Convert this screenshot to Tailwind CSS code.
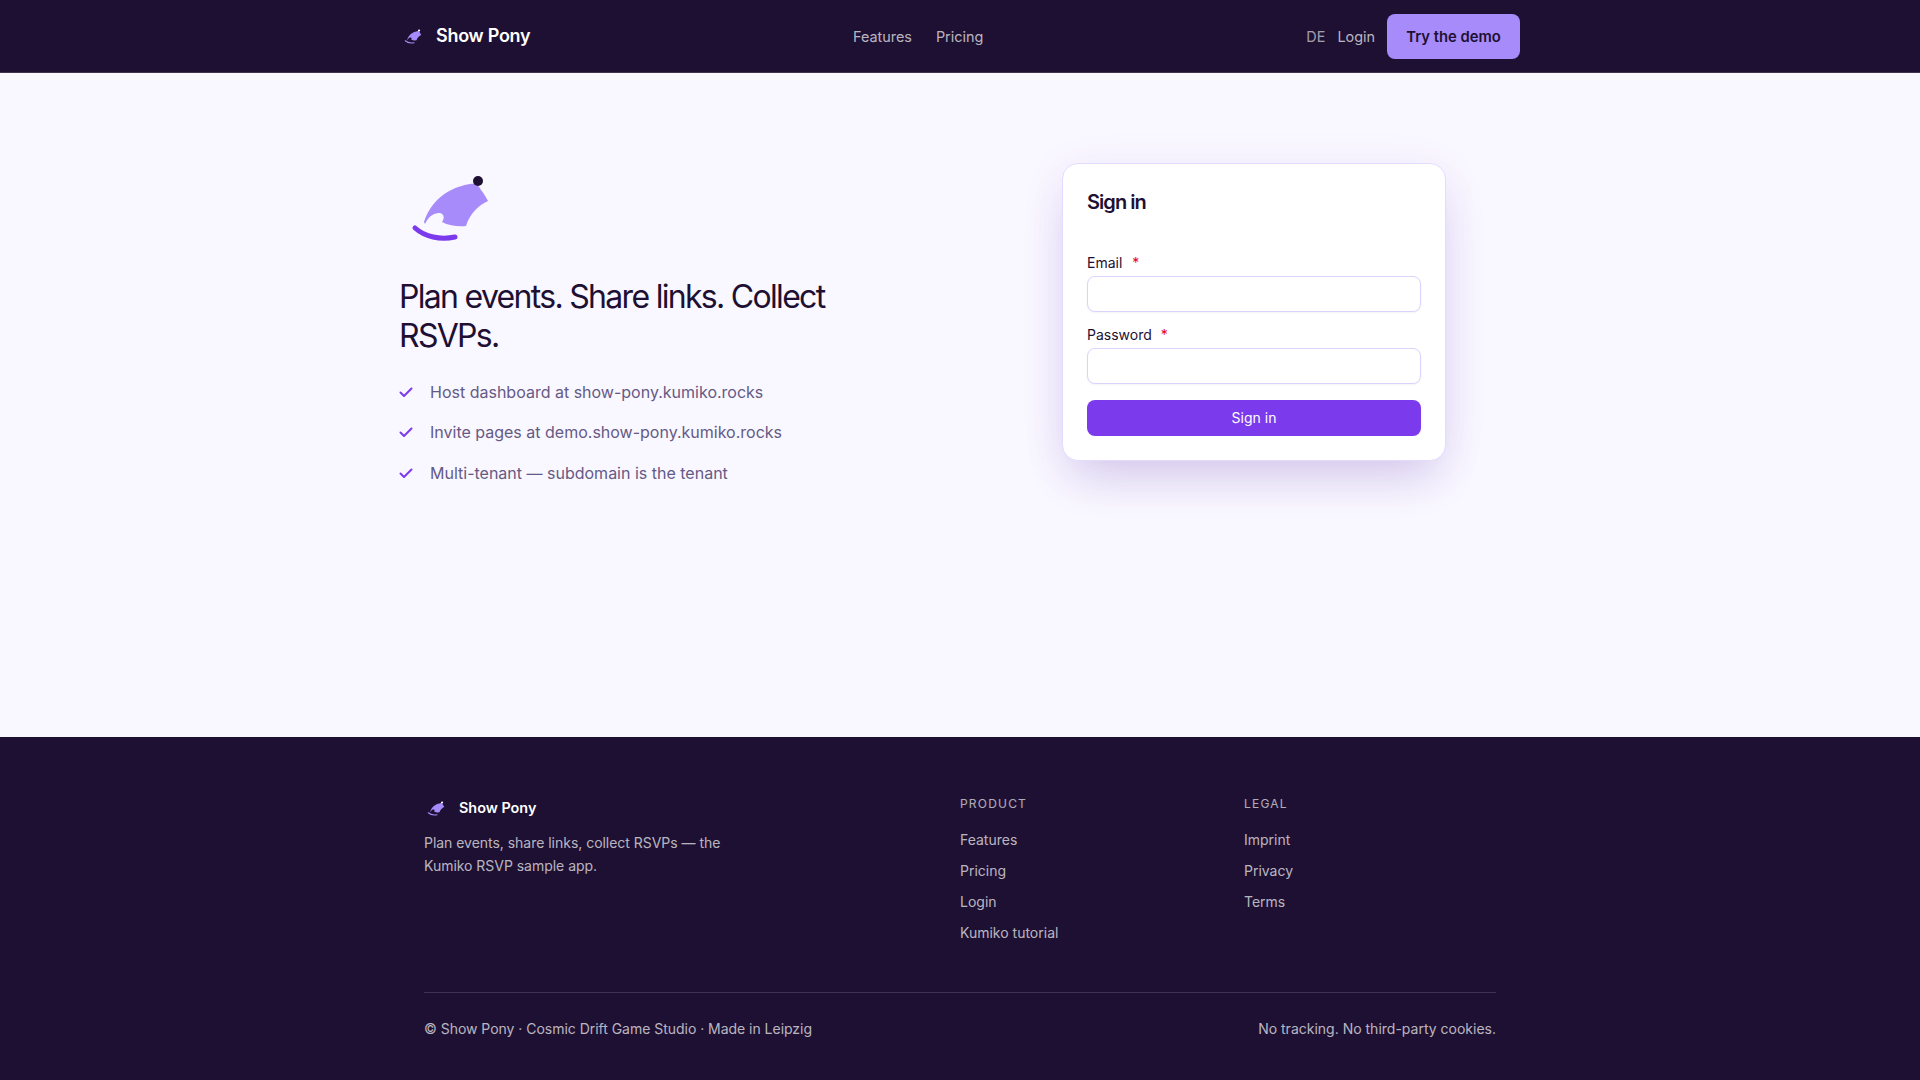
<!DOCTYPE html>
<html lang="en">
<head>
    <meta charset="UTF-8">
    <title>Show Pony - Sign in</title>
    <script src="https://cdn.jsdelivr.net/npm/@tailwindcss/browser@4"></script>
</head>
<body class="bg-[#f9f7ff] font-['Inter',sans-serif] text-[#1e1033] h-[1080px] flex flex-col overflow-hidden antialiased">

    <!-- Header -->
    <header class="bg-[#1e1033] border-b border-white/15 h-[73px] shrink-0">
        <div class="w-[1120px] mx-auto h-[72px] flex items-center">
            <a href="#" class="w-[400px] flex items-center gap-3 text-white text-lg font-semibold tracking-[-0.015em]">
                <span class="w-6 flex justify-center pt-[3px]">
                    <svg width="21" height="21" viewBox="0 0 96 96"><path d="M24 57C29 42 41 24 70 19C76 18 79 21 81 25C84 29 86 32 88 36C79 40 70 48 66 61C60 62 49 61 42 57C45 53 44 49 40 48C35 48 29 50 25 59Z" fill="#a78bfa"/><path d="M15 63C25 72 40 75 55 72" fill="none" stroke="#a78bfa" stroke-width="5" stroke-linecap="round"/><circle cx="78" cy="16" r="5" fill="#fff"/></svg>
                </span>
                Show Pony
            </a>
            <nav class="flex-1 flex gap-6 text-[14.4px] text-white/70 pl-[53px] pt-[1px]">
                <a href="#">Features</a>
                <a href="#">Pricing</a>
            </nav>
            <div class="flex items-center gap-3 text-[14.4px] text-white/70">
                <a href="#" class="text-white/60 pt-[1px]">DE</a>
                <a href="#" class="pt-[1px]">Login</a>
                <a href="#" class="bg-[#a78bfa] text-[#1e1033] text-[14.8px] font-semibold rounded-lg h-[45px] w-[133px] flex items-center justify-center pt-[2px]">Try the demo</a>
            </div>
        </div>
    </header>

    <!-- Main Content -->
    <main class="flex-1 w-[1120px] mx-auto pt-[90px] pr-[74px] flex justify-between items-start">
        <div class="w-[480px]">
            <svg class="mt-[2px]" width="96" height="96" viewBox="0 0 96 96"><path d="M24 57C29 42 41 24 70 19C76 18 79 21 81 25C84 29 86 32 88 36C79 40 70 48 66 61C60 62 49 61 42 57C45 53 44 49 40 48C35 48 29 50 25 59Z" fill="#a78bfa"/><path d="M15 63C25 72 40 75 55 72" fill="none" stroke="#7c3aed" stroke-width="5" stroke-linecap="round"/><circle cx="78" cy="16" r="5" fill="#1e1033"/></svg>
            <h1 class="mt-[16px] -ml-px text-[32px] leading-[39px] font-normal tracking-[-0.053em]">Plan events. Share links. Collect RSVPs.</h1>
            <ul class="mt-[16.7px] flex flex-col text-[#655a85] text-base">
                <li class="h-[40.5px] flex items-center gap-[17px]">
                    <svg class="w-[14px] h-[14px] -ml-px" viewBox="0 0 14 14" fill="none" stroke="#7c3aed" stroke-width="2" stroke-linecap="round" stroke-linejoin="round"><path d="M1.5 7.5L5 11L12.5 3.5"/></svg>
                    Host dashboard at show-pony.kumiko.rocks
                </li>
                <li class="h-[40.5px] flex items-center gap-[17px]">
                    <svg class="w-[14px] h-[14px] -ml-px" viewBox="0 0 14 14" fill="none" stroke="#7c3aed" stroke-width="2" stroke-linecap="round" stroke-linejoin="round"><path d="M1.5 7.5L5 11L12.5 3.5"/></svg>
                    Invite pages at demo.show-pony.kumiko.rocks
                </li>
                <li class="h-[40.5px] flex items-center gap-[17px]">
                    <svg class="w-[14px] h-[14px] -ml-px" viewBox="0 0 14 14" fill="none" stroke="#7c3aed" stroke-width="2" stroke-linecap="round" stroke-linejoin="round"><path d="M1.5 7.5L5 11L12.5 3.5"/></svg>
                    Multi-tenant — subdomain is the tenant
                </li>
            </ul>
        </div>

        <!-- Sign in card -->
        <form class="w-[384px] h-[298px] bg-white border border-[#e4dcff] rounded-2xl px-6 pt-6 shadow-[0_24px_48px_-12px_rgba(76,29,149,0.2),0_8px_48px_rgba(124,58,237,0.07)]">
            <h2 class="text-xl font-semibold tracking-[-0.047em] leading-7">Sign in</h2>
            <label class="block mt-[32px] h-[28px] text-sm font-normal leading-[29px]">Email <span class="text-red-600 ml-1.5">*</span></label>
            <input class="block w-full h-9 border border-[#dcd2ff] rounded-lg bg-white shadow-xs" type="email">
            <label class="block mt-[8px] h-[28px] text-sm font-normal leading-[29px]">Password <span class="text-red-600 ml-[5px]">*</span></label>
            <input class="block w-full h-9 border border-[#dcd2ff] rounded-lg bg-white shadow-xs" type="password">
            <button type="button" class="block w-full h-9 mt-4 bg-[#7c3aed] text-white text-sm font-normal rounded-lg">Sign in</button>
        </form>
    </main>

    <!-- Footer -->
    <footer class="bg-[#1e1033] h-[343px] shrink-0">
        <div class="w-[1072px] mx-auto pt-[59px]">
            <div class="grid grid-cols-[2fr_1fr_1fr] gap-8 h-[196px]">
                <div>
                    <div class="flex items-center gap-[13px] text-white font-semibold text-[14.4px] mt-[2px] h-5">
                        <span class="w-[22px] flex justify-center pt-[2px]">
                            <svg width="21" height="21" viewBox="0 0 96 96"><path d="M24 57C29 42 41 24 70 19C76 18 79 21 81 25C84 29 86 32 88 36C79 40 70 48 66 61C60 62 49 61 42 57C45 53 44 49 40 48C35 48 29 50 25 59Z" fill="#a78bfa"/><path d="M15 63C25 72 40 75 55 72" fill="none" stroke="#a78bfa" stroke-width="5" stroke-linecap="round"/><circle cx="78" cy="16" r="5" fill="#fff"/></svg>
                        </span>
                        Show Pony
                    </div>
                    <p class="mt-[13px] w-[320px] text-sm leading-[23px] text-white/70 tracking-[-0.002em]">Plan events, share links, collect RSVPs — the Kumiko RSVP sample app.</p>
                </div>
                <div>
                    <h3 class="text-xs font-normal uppercase tracking-[0.1em] text-white/65">Product</h3>
                    <ul class="mt-[12px] flex flex-col text-sm text-white/70">
                        <li class="h-[31px] flex items-center">Features</li>
                        <li class="h-[31px] flex items-center">Pricing</li>
                        <li class="h-[31px] flex items-center">Login</li>
                        <li class="h-[31px] flex items-center">Kumiko tutorial</li>
                    </ul>
                </div>
                <div>
                    <h3 class="text-xs font-normal uppercase tracking-[0.1em] text-white/65">Legal</h3>
                    <ul class="mt-[12px] flex flex-col text-sm text-white/70">
                        <li class="h-[31px] flex items-center">Imprint</li>
                        <li class="h-[31px] flex items-center">Privacy</li>
                        <li class="h-[31px] flex items-center">Terms</li>
                    </ul>
                </div>
            </div>
            <div class="border-t border-white/15 pt-[26px] flex justify-between text-sm text-white/70">
                <span class="tracking-[-0.002em]">© Show Pony · Cosmic Drift Game Studio · Made in Leipzig</span>
                <span>No tracking. No third-party cookies.</span>
            </div>
        </div>
    </footer>
</body>
</html>
